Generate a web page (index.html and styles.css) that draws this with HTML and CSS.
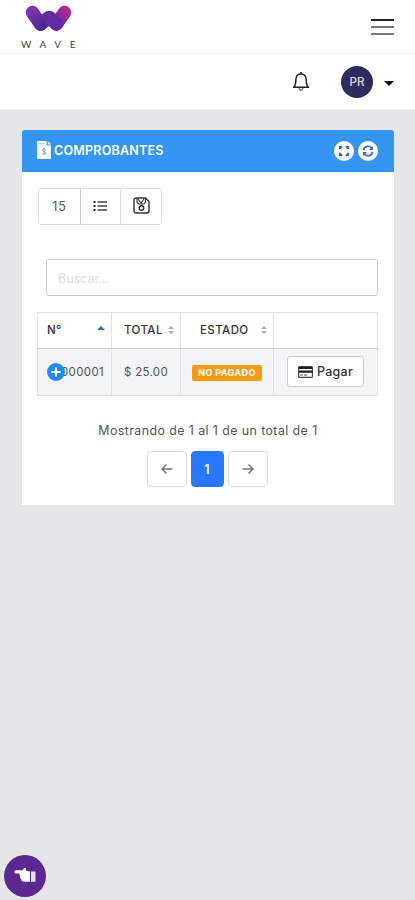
FILE: index.html
```html
<!DOCTYPE html>
<html lang="es">
<head>
<meta charset="utf-8">
<meta name="viewport" content="width=device-width, initial-scale=1">
<title>Comprobantes</title>
<link rel="stylesheet" href="styles.css">
</head>
<body>
<header class="brandbar">
  <div class="brand">
    <svg class="logo" width="48" height="28" viewBox="0 0 48 28" fill="none" stroke-linecap="round">
      <defs>
        <linearGradient id="left" x1="6" y1="6" x2="18" y2="22" gradientUnits="userSpaceOnUse"><stop stop-color="#7a35ad"/><stop offset="1" stop-color="#4c2493"/></linearGradient>
        <linearGradient id="right" x1="42" y1="6" x2="31" y2="22" gradientUnits="userSpaceOnUse"><stop stop-color="#ad2b96"/><stop offset="1" stop-color="#642894"/></linearGradient>
      </defs>
      <path d="M15.500 19 23.500 13M31.500 19 39.500 7.500" stroke="url(#right)" stroke-width="13.500"/>
      <path d="M7.500 7.500 15.500 19" stroke="url(#left)" stroke-width="13.500"/>
      <path d="M24.500 12.500 31.500 19" stroke="#622b9f" stroke-width="13.500"/>
    </svg>
    <span class="brand-name">WAVE</span>
  </div>
  <div class="menu"><i></i><i></i><i></i></div>
</header>
<nav class="userbar">
  <svg class="bell" width="18" height="21" viewBox="0 0 18 21" fill="none" stroke="#222" stroke-width="1.500" stroke-linejoin="round"><path d="M9 1v2M1.500 16.200c1.900-1.400 2.300-3.200 2.300-7C3.800 5.200 5.800 3 9 3s5.200 2.200 5.200 6.200c0 3.800.4 5.600 2.300 7Z"/><path d="M7.200 17c0 3 3.600 3 3.600 0" stroke="#777"/></svg>
  <span class="avatar">PR</span>
  <span class="caret"></span>
</nav>
<main class="card">
  <div class="card-head">
    <svg width="14" height="18" viewBox="0 0 14 18"><path d="M1 0h8.500v4.500H14V17a1 1 0 0 1-1 1H1a1 1 0 0 1-1-1V1a1 1 0 0 1 1-1Zm9.700 0L14 3.400h-3.300Z" fill="#fff"/><path d="M2.200 2.700h2M5.600 2.700h2M8.800 8.500c-1-1-3.500-.8-3.500.7 0 1.700 3.600.9 3.600 2.600 0 1.500-2.600 1.600-3.700.6M7 7v7" stroke="#6aa7ee" fill="none"/></svg>
    <h1>COMPROBANTES</h1>
    <span class="round"><svg width="12" height="12" viewBox="0 0 12 12" fill="none" stroke="#3a67c9" stroke-width="2"><path d="M2 4.300V2h2.300M7.700 2H10v2.300M10 7.700V10H7.700M4.300 10H2V7.700"/></svg></span>
    <span class="round"><svg width="12" height="12" viewBox="0 0 12 12" fill="none" stroke="#3a67c9" stroke-width="1.700"><path d="M1.500 5A4.600 4.600 0 0 1 9.600 3M10.500 7A4.600 4.600 0 0 1 2.400 9"/><path d="M11 1v4H7ZM1 11V7h4Z" fill="#3a67c9" stroke="none"/></svg></span>
  </div>
  <div class="card-body">
    <div class="tools">
      <button class="count">15</button>
      <button class="list"><svg width="14" height="12" viewBox="0 0 14 12" fill="none" stroke="#444" stroke-width="1.400"><path d="M4.500 2H14M4.500 6H14M4.500 10H14"/><path d="M.5 2h2M.5 6h2M.5 10h2" stroke="#222" stroke-width="2"/></svg></button>
      <button class="save"><svg width="17" height="17" viewBox="0 0 17 17" fill="none" stroke="#333" stroke-width="1.400"><path d="M3 1h9.500L16 4.500V14a2 2 0 0 1-2 2H3a2 2 0 0 1-2-2V3a2 2 0 0 1 2-2Z"/><path d="M4 1.500v4l2 1.500h5l1.500-1.500v-4M5 2l3 4 3-4" stroke-width="1.100"/><circle cx="8.500" cy="11" r="2.200"/></svg></button>
    </div>
    <input class="search" type="text" placeholder="Buscar...">
    <table>
      <colgroup><col class="c1"><col class="c2"><col class="c3"><col class="c4"></colgroup>
      <thead><tr>
        <th><div class="th"><span>N°</span><i class="asc"></i></div></th>
        <th><div class="th total"><span>TOTAL</span><i class="sort"></i></div></th>
        <th><div class="th state"><span>ESTADO</span><i class="sort"></i></div></th>
        <th></th>
      </tr></thead>
      <tbody><tr>
        <td><div class="number"><svg class="plus" width="18" height="18" viewBox="0 0 18 18"><circle cx="9" cy="9" r="9" fill="#218bf0"/><path d="M4.500 9h9M9 4.500v9" stroke="#fff" stroke-width="2"/></svg><span>000001</span></div></td>
        <td class="amount">$ 25.00</td>
        <td class="status"><span class="badge">NO PAGADO</span></td>
        <td class="action"><button class="pay"><svg width="15" height="12" viewBox="0 0 15 12"><rect x=".6" y=".6" width="13.800" height="10.800" rx="1" fill="#fff" stroke="#444" stroke-width="1.100"/><path d="M.5 1h14v2H.5ZM.5 4.500h14v2.200H.5Z" fill="#222"/><path d="M2 9h3M6 9h3" stroke="#555"/></svg><span>Pagar</span></button></td>
      </tr></tbody>
    </table>
    <p class="summary">Mostrando de 1 al 1 de un total de 1</p>
    <div class="pages">
      <button class="arrow"><svg width="12" height="12" viewBox="0 0 12 12" fill="none" stroke="#777" stroke-width="1.500"><path d="M11.500 6H1M5.500 1.500 1 6l4.500 4.500"/></svg></button>
      <button class="current">1</button>
      <button class="arrow"><svg width="12" height="12" viewBox="0 0 12 12" fill="none" stroke="#777" stroke-width="1.500"><path d="M.5 6H11M6.500 1.500 11 6l-4.500 4.500"/></svg></button>
    </div>
  </div>
</main>
<button class="help"><svg width="23" height="18" viewBox="0 0 23 18" fill="#fff"><path d="M2 3.200h6.500L10.200 1c1.200-.8 2.200.3 1.800 1.300l-.5 1.200 4.500.9v10.400h-5.500C8 14.800 7 13.500 7.300 12 6 11.300 5.800 10 6.300 9 5.300 8.300 5.200 7.200 5.700 6.400H2C0 6.400 0 3.200 2 3.200Z"/><path d="M17 4.500h4.500v10.300H17Z" opacity=".85"/></svg></button>
</body>
</html>
```
FILE: styles.css
```css
* { box-sizing: border-box; }
body {
  margin: 0;
  min-height: 900px;
  background: #e4e6e8;
  font-family: Inter, "Liberation Sans", sans-serif;
  font-size: 12px;
  color: #555;
}
button { font: inherit; color: inherit; margin: 0; padding: 0; background: #fff; border: 1px solid #dcdcdc; display: flex; align-items: center; justify-content: center; }
svg { display: block; flex: none; }

.brandbar { height: 54px; padding: 5px 21px 0 21px; background: #fff; border-bottom: 1px solid #eee; display: flex; justify-content: space-between; }
.brand { width: 60px; }
.logo { margin-left: 4px; }
.brand-name { display: block; margin-top: 5px; font: 10px/12px Lato, sans-serif; letter-spacing: 8.6px; white-space: nowrap; color: #444; }
.menu { width: 23px; margin-top: 14px; display: flex; flex-direction: column; gap: 5px; }
.menu i { height: 2px; background: #777; }
.menu i:first-child { background: #222; }

.userbar { height: 56px; padding-right: 21px; background: #fff; border-bottom: 1px solid #eee; display: flex; align-items: center; justify-content: flex-end; }
.bell { margin-right: 31px; }
.avatar { width: 32px; height: 32px; border-radius: 50%; background: #2e2b5f; color: #dddbe8; font-size: 11.500px; font-weight: 500; display: flex; align-items: center; justify-content: center; }
.caret { margin: 4px 0 0 11px; border: 5px solid transparent; border-top: 5px solid #111; border-bottom: 0; }

.card { width: 372px; height: 375px; margin: 20px 0 0 22px; background: #fff; border-radius: 3px 3px 0 0; }
.card-head { height: 42px; padding: 0 16px 0 15px; background: #3595f3; border-radius: 3px 3px 0 0; display: flex; align-items: center; }
.card-head h1 { margin: 0 auto 0 3px; color: #fff; font-size: 12.500px; line-height: 16px; font-weight: 600; letter-spacing: .22px; }
.card-head > svg { margin-top: -2px; }
.round { width: 20px; height: 20px; border-radius: 50%; background: #fff; display: flex; align-items: center; justify-content: center; }
.round + .round { margin-left: 4px; }
.card-body { padding: 16px 16px 0; }

.tools { display: flex; height: 37px; }
.tools button { border-color: #dedede; }
.tools .count { width: 43px; font-size: 12.500px; letter-spacing: .9px; border-radius: 3px 0 0 3px; }
.tools .list { width: 41px; border-left-color: #ccc; margin-left: -1px; }
.tools .save { width: 42px; margin-left: -1px; border-radius: 0 3px 3px 0; }
.list svg, .save svg { margin-top: -2px; }
.list svg { margin-left: -1px; }

.search { display: block; width: 332px; height: 37px; margin: 34px 0 0 8px; padding: 2px 11px 0; border: 1px solid #ccc; border-radius: 2px; font: 12.500px Inter, sans-serif; background: #fff; }
.search::placeholder { color: #dcdcdc; opacity: 1; }

table { width: 340px; margin-top: 16px; margin-left: -1px; table-layout: fixed; border-collapse: collapse; }
.c1 { width: 74px; }
.c2 { width: 69px; }
.c3 { width: 93px; }
.c4 { width: 104px; }
th, td { padding: 0; border: 1px solid #dfe1e3; }
thead tr { height: 36px; }
tbody tr { height: 47px; background: #f3f4f6; }
th { border-bottom-color: #ccc; color: #333; font-weight: 500; font-size: 11.500px; text-align: left; letter-spacing: .4px; }
.th { display: flex; align-items: center; justify-content: space-between; padding: 0 6px 1px 9px; }
.total { padding: 0 6px 1px 12px; }
.state { padding: 0 6px 1px 19px; }
.asc { border: 4px solid transparent; border-top: 0; border-bottom: 4px solid #236be8; margin-bottom: 4px; }
.sort { display: flex; flex-direction: column; gap: 2px; }
.sort::before, .sort::after { content: ""; border: 3.500px solid transparent; }
.sort::before { border-top: 0; border-bottom: 3.500px solid #aaa; }
.sort::after { border-bottom: 0; border-top: 3.500px solid #aaa; }
.number { display: flex; align-items: center; padding-left: 9px; font-size: 11.500px; }
.number span { margin-left: -4px; letter-spacing: .35px; }
.plus { position: relative; z-index: 1; }
.amount { text-align: center; font-size: 11.500px; letter-spacing: .3px; }
.badge { display: block; width: 70px; height: 16px; margin: 2px auto 0; border-radius: 2px; background: #f79a13; color: #fff; font-size: 9px; font-weight: 700; line-height: 16px; text-align: center; letter-spacing: .4px; }
.pay { width: 77px; height: 31px; margin: -1px auto 0; border-color: #ccc; border-radius: 3px; gap: 4px; color: #333; font-size: 12.500px; font-weight: 500; letter-spacing: .25px; }

.summary { margin: 26px 0 0; line-height: 18px; text-align: center; font-size: 12.400px; letter-spacing: .42px; white-space: nowrap; }
.pages { display: flex; justify-content: center; gap: 4px; margin: 11px 2px 0 0; }
.pages button { height: 36px; border-radius: 4px; }
.pages .arrow { width: 40px; }
.pages .current { width: 33px; background: #2979ff; border-color: #2979ff; color: #fff; font-size: 12.500px; font-weight: 600; }
.help { position: fixed; left: 4px; bottom: 3px; width: 42px; height: 42px; border: 0; border-radius: 50%; background: #5b2891; }
```
